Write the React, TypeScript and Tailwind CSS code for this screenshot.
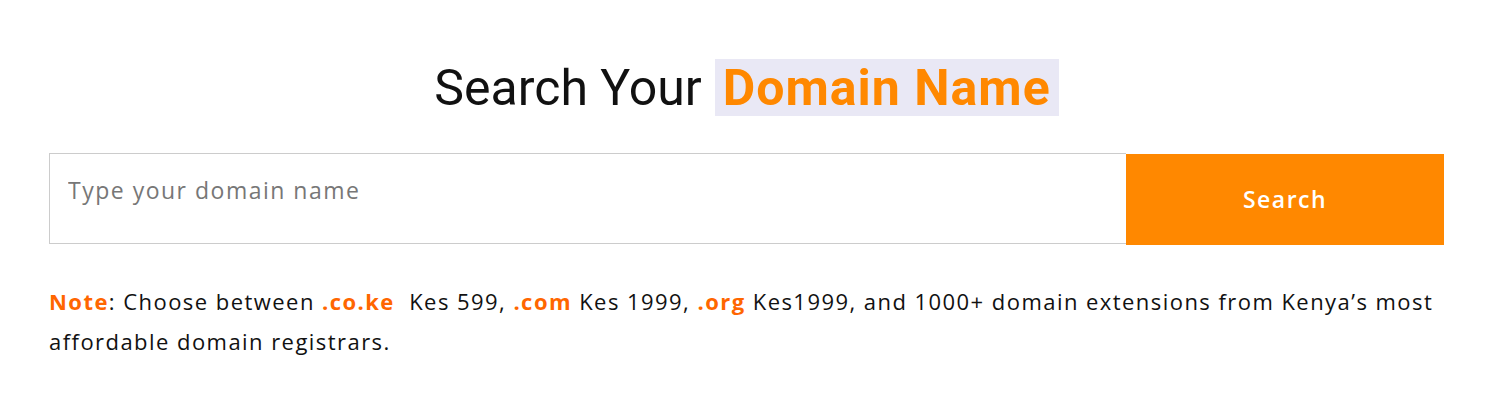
import React from "react";

const App = () => {
  return (
    <section className="w-full bg-white pt-[59px] pb-10" style={{ fontFamily: '"Open Sans", sans-serif' }}>
      <div className="ml-[49px] mr-[60px]">
        {/* Heading */}
        <h2
          className="flex items-center justify-center text-[50px] leading-none text-[#111111]"
          style={{ fontFamily: "Roboto, sans-serif" }}
        >
          <span className="mr-[13px]">Search Your</span>
          <span className="inline-flex h-[57px] items-center bg-[#e9e8f5] pl-[8px] pr-[8px] font-bold tracking-[1px] text-[#ff8800]">
            Domain Name
          </span>
        </h2>

        {/* Search bar */}
        <div className="mt-[37px] flex">
          <div className="flex h-[91px] flex-1 border border-[#cccccc] border-r-0">
            <input
              type="text"
              placeholder="Type your domain name"
              className="h-[72px] w-full px-[18px] text-[23px] tracking-[1.5px] text-[#333] outline-none placeholder:text-[#777777]"
            />
          </div>
          <button className="mt-[1px] h-[91px] w-[318px] bg-[#ff8800] text-[23px] font-semibold tracking-[1.5px] text-white">
            Search
          </button>
        </div>

        {/* Note */}
        <p className="mt-[36px] text-[22px] leading-[40px] tracking-[1.45px] text-[#111111]">
          <span className="font-bold text-[#ff6600]">Note</span>: Choose between{" "}
          <span className="font-bold text-[#ff6600]">.co.ke</span>&nbsp; Kes 599,{" "}
          <span className="font-bold text-[#ff6600]">.com</span> Kes 1999,{" "}
          <span className="font-bold text-[#ff6600]">.org</span> Kes1999, and 1000+ domain extensions from Kenya’s most
          <br />
          affordable domain registrars.
        </p>
      </div>
    </section>
  );
};

export default App;
